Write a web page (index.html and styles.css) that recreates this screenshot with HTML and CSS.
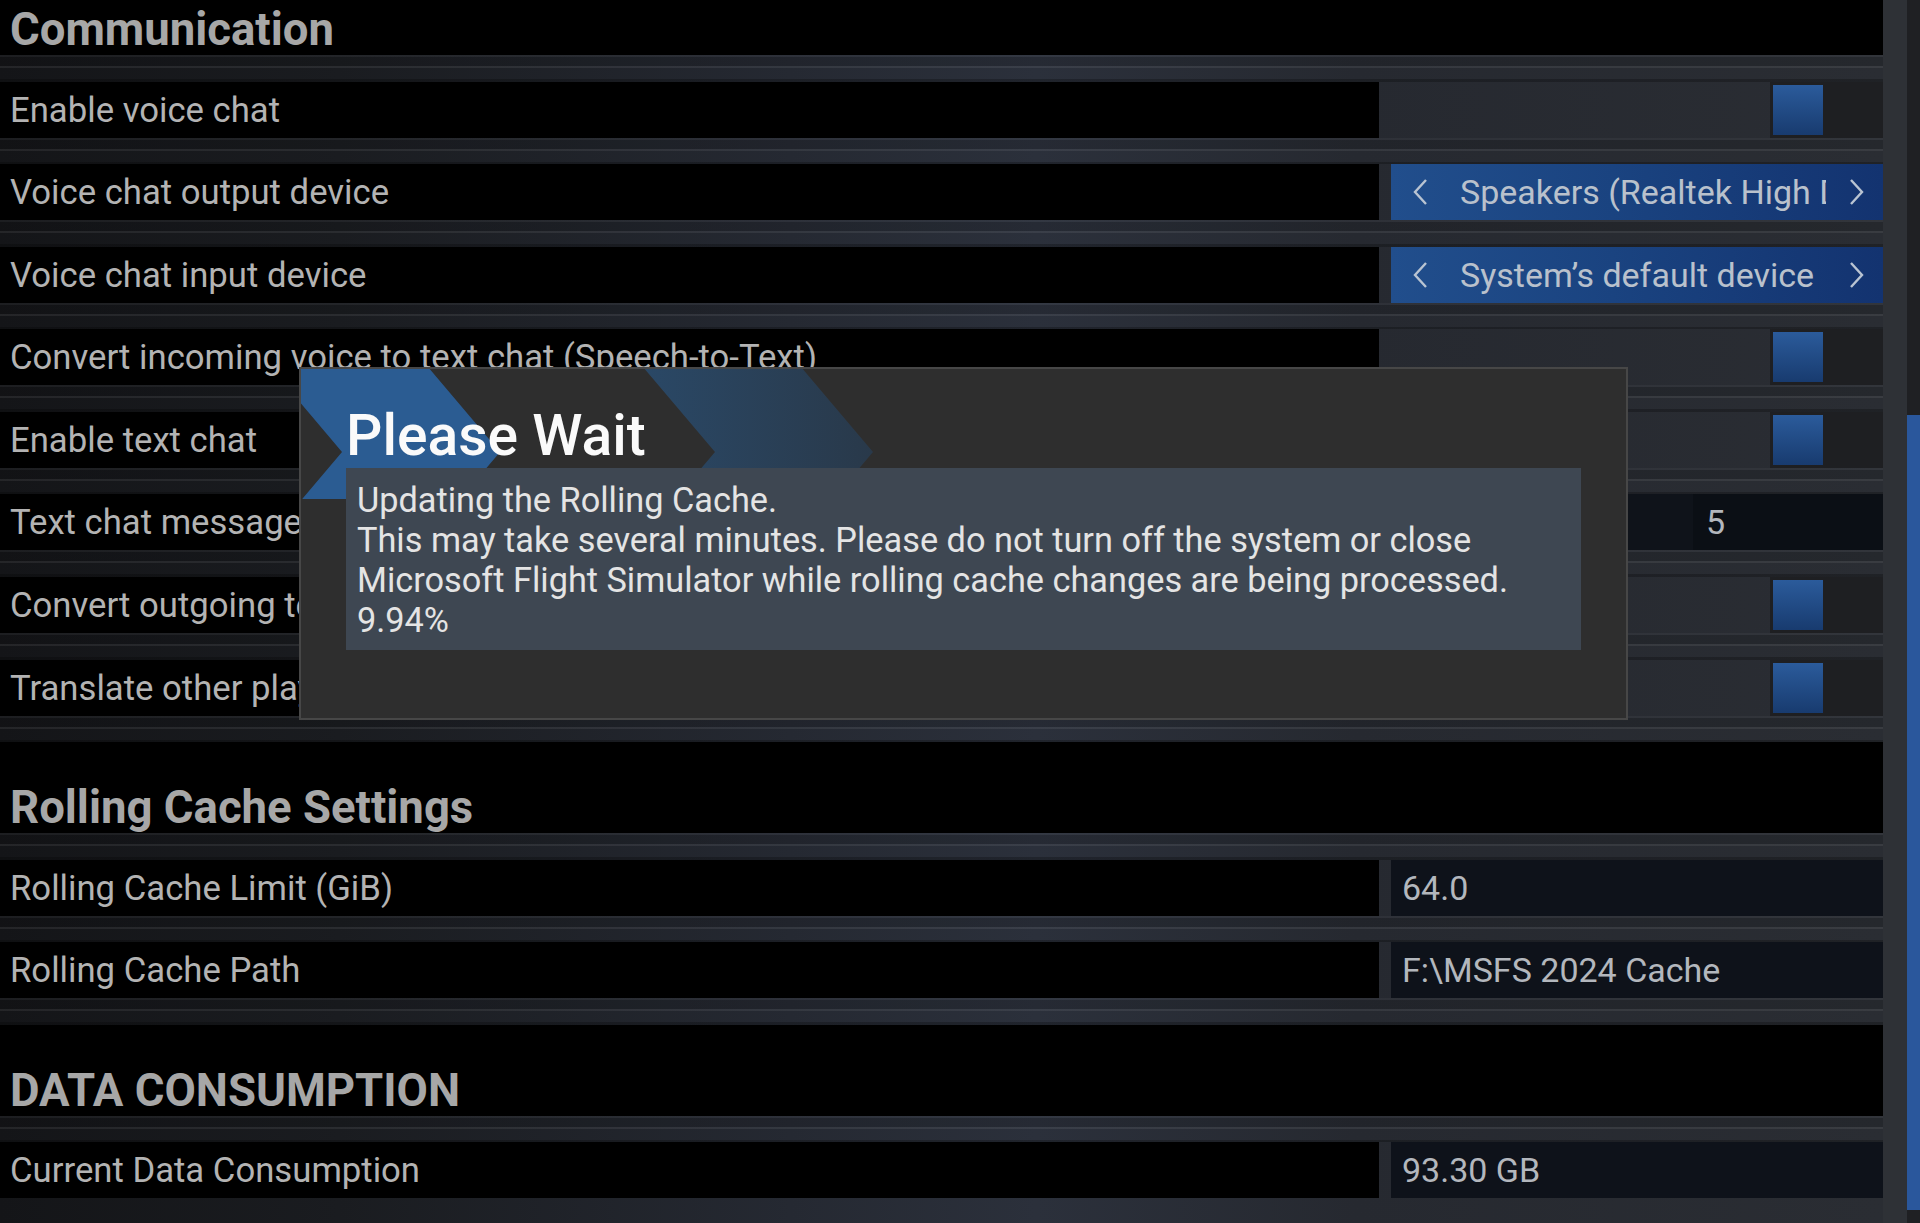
FILE: index.html
```html
<!DOCTYPE html>
<html lang="en">
<head>
    <meta charset="UTF-8">
    <meta name="viewport" content="width=device-width, initial-scale=1.0">
    <title>Settings - Communication</title>
    <link rel="stylesheet" href="styles.css">
</head>
<body>
    <div class="screen">
        <div class="panel">
            <div class="list">
                <div class="section-head first">Communication</div>

                <div class="setting">
                    <div class="label">Enable voice chat</div>
                    <div class="control">
                        <span class="toggle"><span class="knob"></span></span>
                    </div>
                </div>

                <div class="setting">
                    <div class="label">Voice chat output device</div>
                    <div class="control selector">
                        <svg class="arrow" viewBox="0 0 19 30"><polyline points="15,3 4,15 15,27"/></svg>
                        <span class="sel-text">Speakers (Realtek High Definition Audio)</span>
                        <svg class="arrow" viewBox="0 0 19 30"><polyline points="4,3 15,15 4,27"/></svg>
                    </div>
                </div>

                <div class="setting">
                    <div class="label">Voice chat input device</div>
                    <div class="control selector">
                        <svg class="arrow" viewBox="0 0 19 30"><polyline points="15,3 4,15 15,27"/></svg>
                        <span class="sel-text">System’s default device</span>
                        <svg class="arrow" viewBox="0 0 19 30"><polyline points="4,3 15,15 4,27"/></svg>
                    </div>
                </div>

                <div class="setting">
                    <div class="label">Convert incoming voice to text chat (Speech-to-Text)</div>
                    <div class="control">
                        <span class="toggle"><span class="knob"></span></span>
                    </div>
                </div>

                <div class="setting">
                    <div class="label">Enable text chat</div>
                    <div class="control">
                        <span class="toggle"><span class="knob"></span></span>
                    </div>
                </div>

                <div class="setting">
                    <div class="label">Text chat message duration (seconds)</div>
                    <div class="control field number">
                        <span class="slider"></span>
                        <span class="value">5</span>
                    </div>
                </div>

                <div class="setting">
                    <div class="label">Convert outgoing text chat to voice (Text-to-Speech)</div>
                    <div class="control">
                        <span class="toggle"><span class="knob"></span></span>
                    </div>
                </div>

                <div class="setting">
                    <div class="label">Translate other players' text chat</div>
                    <div class="control">
                        <span class="toggle"><span class="knob"></span></span>
                    </div>
                </div>

                <div class="section-head">Rolling Cache Settings</div>

                <div class="setting">
                    <div class="label">Rolling Cache Limit (GiB)</div>
                    <div class="control field"><span class="value">64.0</span></div>
                </div>

                <div class="setting">
                    <div class="label">Rolling Cache Path</div>
                    <div class="control field"><span class="value">F:\MSFS 2024 Cache</span></div>
                </div>

                <div class="section-head">DATA CONSUMPTION</div>

                <div class="setting">
                    <div class="label">Current Data Consumption</div>
                    <div class="control field"><span class="value">93.30 GB</span></div>
                </div>
            </div>
        </div>

        <div class="edge"></div>
        <div class="scrollbar"><div class="thumb"></div></div>

        <!-- popup while the rolling cache is being rebuilt -->
        <div class="dialog">
            <svg class="dialog-deco" width="700" height="130" viewBox="0 0 700 130">
                <defs>
                    <linearGradient id="chev2" x1="0" y1="0" x2="1" y2="0">
                        <stop offset="0" stop-color="#2a4866"/>
                        <stop offset="1" stop-color="#29394a"/>
                    </linearGradient>
                </defs>
                <polygon points="-31,-2 127,-2 199,83 127,168 -31,168 41,83" fill="#2b5c92"/>
                <polygon points="342,-2 500,-2 572,83 500,168 342,168 414,83" fill="url(#chev2)"/>
            </svg>
            <h2 class="dialog-title">Please Wait</h2>
            <div class="dialog-body">
                Updating the Rolling Cache.<br>
                This may take several minutes. Please do not turn off the system or close<br>
                Microsoft Flight Simulator while rolling cache changes are being processed.<br>
                9.94%
            </div>
        </div>
    </div>
</body>
</html>
```

FILE: styles.css
```css
html, body {
    margin: 0;
    padding: 0;
}
body {
    width: 1920px;
    height: 1223px;
    overflow: hidden;
    background-color: #1d1f23;
    font-family: Roboto, "Liberation Sans", sans-serif;
}
.screen {
    position: relative;
    display: flex;
    height: 1223px;
}
.panel {
    width: 1883px;
    overflow: hidden;
    background: linear-gradient(90deg, #141518 0%, #1a1c20 18%, #252932 42%, #2b303b 55%, #262930 72%, #2a2d33 100%);
}
.list {
    display: flex;
    flex-direction: column;
    gap: 26.57px;
}
.section-head,
.setting {
    position: relative;
}
/* the stripe in the gap above every item */
.section-head::before,
.setting::before {
    content: "";
    position: absolute;
    left: 0;
    right: 0;
    top: -26.57px;
    height: 26.57px;
    background: linear-gradient(180deg,
        rgba(255, 255, 255, 0.04) 0, rgba(255, 255, 255, 0.04) 2px,
        rgba(0, 0, 0, 0.12) 2px, rgba(0, 0, 0, 0.12) 11px,
        rgba(255, 255, 255, 0.07) 11px, rgba(255, 255, 255, 0.07) 13px,
        transparent 13px, transparent 24px,
        rgba(0, 0, 0, 0.25) 24px);
}
.section-head {
    height: 91px;
    box-sizing: border-box;
    display: flex;
    align-items: flex-end;
    padding: 0 0 3px 10px;
    background-color: #000;
    color: #a7a7a7;
    font-size: 45.5px;
    line-height: 45px;
    font-weight: 700;
}
.section-head.first {
    margin-top: -36px;
}
.setting {
    display: flex;
    height: 56px;
}
.label {
    width: 1379px;
    box-sizing: border-box;
    padding-left: 10px;
    background-color: #000;
    color: #b3b3b3;
    font-size: 34.7px;
    line-height: 56px;
    white-space: nowrap;
    overflow: hidden;
}
.control {
    margin-left: 12px;
    width: 492px;
    display: flex;
    justify-content: flex-end;
    align-items: center;
}
.toggle {
    width: 113px;
    height: 56px;
    box-sizing: border-box;
    padding: 3px;
    background-color: #1e1f22;
}
.knob {
    display: block;
    width: 50px;
    height: 50px;
    background: linear-gradient(180deg, #2b5b9b, #183b6f);
}
.selector {
    justify-content: flex-start;
    box-sizing: border-box;
    padding: 0 17px 0 20px;
    background: linear-gradient(90deg, #214e8c 0%, #1a4380 45%, #133370 100%);
}
.arrow {
    width: 19px;
    height: 30px;
    flex: none;
}
.arrow polyline {
    fill: none;
    stroke: #b9c4d2;
    stroke-width: 2.4;
}
.sel-text {
    flex: 1;
    margin: 0 21px 0 30px;
    overflow: hidden;
    white-space: nowrap;
    color: #b9c1cc;
    font-size: 34px;
    line-height: 56px;
}
.field {
    justify-content: flex-start;
    background-color: #0e121a;
}
.field .value {
    padding-left: 11px;
    color: #b3b7bd;
    font-size: 34px;
    line-height: 56px;
    white-space: nowrap;
}
.number {
    background-color: #0b0f15;
}
.slider {
    width: 302px;
    height: 56px;
    background-color: #0f131a;
}
.number .value {
    padding-left: 13px;
}
.edge {
    width: 24px;
    background-color: #2e3136;
}
.scrollbar {
    width: 13px;
    background-color: #1f2023;
    display: flex;
    flex-direction: column;
}
.thumb {
    margin-top: 415px;
    height: 795px;
    background-color: #2a579c;
}
.dialog {
    position: absolute;
    left: 299px;
    top: 367px;
    width: 1329px;
    height: 353px;
    box-sizing: border-box;
    padding: 0 45px;
    border: 2px solid #474747;
    background-color: #2e2e2e;
    overflow: hidden;
}
.dialog-deco {
    position: absolute;
    left: 0;
    top: 0;
}
.dialog-title {
    position: relative;
    margin: 0 0 4px 0;
    padding-top: 39px;
    color: #fafafa;
    font-size: 57px;
    line-height: 56px;
    font-weight: 500;
}
.dialog-body {
    position: relative;
    padding: 12px 11px 10px;
    background-color: #3e4752;
    color: #e4e4e4;
    font-size: 34.3px;
    line-height: 40px;
    white-space: nowrap;
}
```
